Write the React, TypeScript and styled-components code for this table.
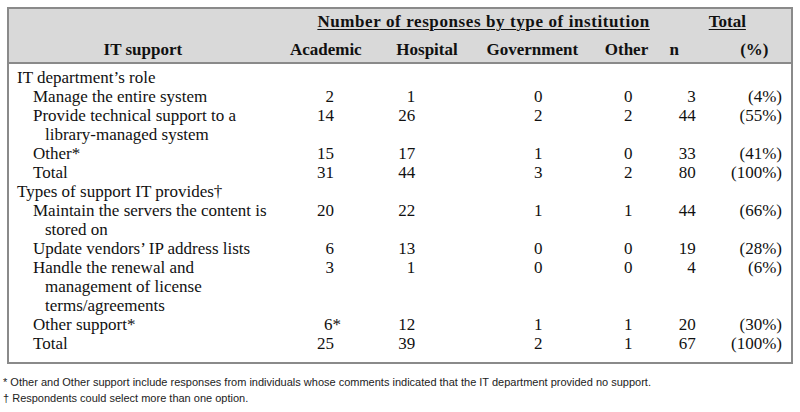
import React from "react";
import styled, { createGlobalStyle } from "styled-components";

const GlobalStyle = createGlobalStyle`
  html, body { margin: 0; padding: 0; background: #ffffff; }
  body { width: 800px; height: 412px; overflow: hidden; }
`;

const Page = styled.div`
  padding: 7px 7px 0 3px;
  display: flex;
  flex-direction: column;
  align-items: flex-start;
`;

const Table = styled.table`
  margin-left: 4px;
  width: 786px;
  border-collapse: collapse;
  table-layout: fixed;
  border: 2px solid #8a8a8a;
  font-family: "Liberation Serif", "Times New Roman", serif;
  font-size: 17px;
  line-height: 19px;
  color: #111;
`;

const Head = styled.thead`
  background: #d9d9d9;
  border-bottom: 2px solid #8a8a8a;
`;

const HeadRow = styled.tr<{ $height: number }>`
  height: ${(p) => p.$height}px;
`;

const GroupCell = styled.th<{ $padL?: number }>`
  font-weight: bold;
  text-align: center;
  vertical-align: top;
  padding: 3px 0 0 ${(p) => p.$padL ?? 0}px;
  white-space: nowrap;
`;

const GroupText = styled.span<{ $spread?: boolean }>`
  text-decoration: underline;
  text-underline-offset: 2px;
  text-decoration-thickness: 1px;
  letter-spacing: ${(p) => (p.$spread ? "0.6px" : "0")};
`;

const HeadCell = styled.th<{ $padL?: number; $padR?: number }>`
  font-weight: bold;
  text-align: center;
  vertical-align: bottom;
  padding: 0 ${(p) => p.$padR ?? 0}px 3px ${(p) => p.$padL ?? 0}px;
  white-space: nowrap;
`;

const Body = styled.tbody`
  tr:first-child td { padding-top: 4px; }
  tr:last-child td { padding-bottom: 9px; }
`;

const Row = styled.tr``;

const LabelCell = styled.td<{ $item?: boolean }>`
  vertical-align: top;
  padding: 0 0 0 ${(p) => (p.$item ? 36 : 8)}px;
  text-indent: ${(p) => (p.$item ? -12 : 0)}px;
  white-space: nowrap;
`;

const NumCell = styled.td<{ $padR: number }>`
  vertical-align: top;
  text-align: right;
  padding: 0 ${(p) => p.$padR}px 0 0;
  white-space: nowrap;
`;

const Hang = styled.span`
  margin-right: -7px;
`;

const Notes = styled.div`
  margin-top: 10px;
  font-family: "Liberation Sans", Arial, sans-serif;
  font-size: 11px;
  line-height: 16px;
  color: #222;
`;

const Note = styled.div``;

type Col = { width: number; padL?: number; padR?: number; val: number };

const cols: Col[] = [
  { width: 268, val: 0 },
  { width: 98, val: 41 },
  { width: 104, val: 64 },
  { width: 106, val: 43 },
  { width: 67, padL: 15, val: 20 },
  { width: 55, padR: 12, val: 12 },
  { width: 84, padL: 10, val: 9 },
];

type DataRow = {
  label: string[];
  item?: boolean;
  values?: (string | React.ReactNode)[];
};

const rows: DataRow[] = [
  { label: ["IT department\u2019s role"] },
  { label: ["Manage the entire system"], item: true, values: ["2", "1", "0", "0", "3", "(4%)"] },
  {
    label: ["Provide technical support to a", "library-managed system"],
    item: true,
    values: ["14", "26", "2", "2", "44", "(55%)"],
  },
  { label: ["Other*"], item: true, values: ["15", "17", "1", "0", "33", "(41%)"] },
  { label: ["Total"], item: true, values: ["31", "44", "3", "2", "80", "(100%)"] },
  { label: ["Types of support IT provides\u2020"] },
  {
    label: ["Maintain the servers the content is", "stored on"],
    item: true,
    values: ["20", "22", "1", "1", "44", "(66%)"],
  },
  {
    label: ["Update vendors\u2019 IP address lists"],
    item: true,
    values: ["6", "13", "0", "0", "19", "(28%)"],
  },
  {
    label: ["Handle the renewal and", "management of license", "terms/agreements"],
    item: true,
    values: ["3", "1", "0", "0", "4", "(6%)"],
  },
  {
    label: ["Other support*"],
    item: true,
    values: [
      <>
        6<Hang>*</Hang>
      </>,
      "12",
      "1",
      "1",
      "20",
      "(30%)",
    ],
  },
  { label: ["Total"], item: true, values: ["25", "39", "2", "1", "67", "(100%)"] },
];

const headers = ["IT support", "Academic", "Hospital", "Government", "Other", "n", "(%)"];

export default function App() {
  return (
    <>
      <GlobalStyle />
      <Page>
        <Table>
          <colgroup>
            {cols.map((c, i) => (
              <col key={i} style={{ width: c.width }} />
            ))}
          </colgroup>
          <Head>
            <HeadRow $height={28}>
              <GroupCell />
              <GroupCell colSpan={4} $padL={38}>
                <GroupText $spread>Number of responses by type of institution</GroupText>
              </GroupCell>
              <GroupCell colSpan={2} $padL={11}>
                <GroupText>Total</GroupText>
              </GroupCell>
            </HeadRow>
            <HeadRow $height={27}>
              {headers.map((h, i) => (
                <HeadCell key={h} $padL={cols[i].padL} $padR={cols[i].padR}>
                  {h}
                </HeadCell>
              ))}
            </HeadRow>
          </Head>
          <Body>
            {rows.map((r, ri) => (
              <Row key={ri}>
                <LabelCell $item={r.item}>
                  {r.label.map((l, li) => (
                    <React.Fragment key={li}>
                      {li > 0 && <br />}
                      {l}
                    </React.Fragment>
                  ))}
                </LabelCell>
                {cols.slice(1).map((c, ci) => (
                  <NumCell key={ci} $padR={c.val}>
                    {r.values ? r.values[ci] : ""}
                  </NumCell>
                ))}
              </Row>
            ))}
          </Body>
        </Table>
        <Notes>
          <Note>
            * Other and Other support include responses from individuals whose comments indicated that
            the IT department provided no support.
          </Note>
          <Note>{"\u2020"} Respondents could select more than one option.</Note>
        </Notes>
      </Page>
    </>
  );
}
